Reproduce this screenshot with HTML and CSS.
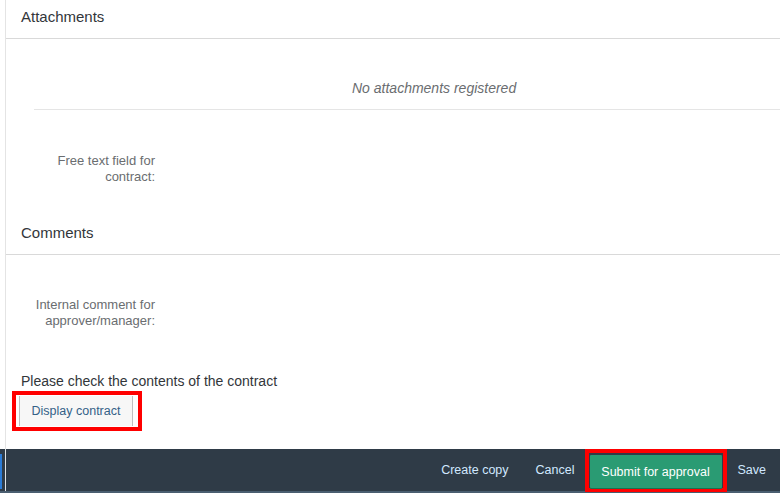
FILE: index.html
```html
<!DOCTYPE html>
<html>
<head>
<meta charset="utf-8">
<link rel="stylesheet" href="styles.css">
</head>
<body>
<div class="screen">
  <main class="content">
    <section class="section">
      <h2 class="section-title">Attachments</h2>
      <div class="empty-row"><span class="empty-text">No attachments registered</span></div>
      <div class="form-row row-free">
        <label class="form-label">Free text field for<br>contract:</label>
        <div class="form-value"></div>
      </div>
    </section>
    <section class="section">
      <h2 class="section-title">Comments</h2>
      <div class="form-row row-comment">
        <label class="form-label">Internal comment for<br>approver/manager:</label>
        <div class="form-value"></div>
      </div>
    </section>
    <div class="check">
      <p class="check-text">Please check the contents of the contract</p>
      <div class="highlight highlight-display">
        <button class="btn-display">Display contract</button>
      </div>
    </div>
  </main>
  <footer class="footer">
    <span class="footer-marker"></span>
    <div class="footer-actions">
      <button class="footer-btn">Create copy</button>
      <button class="footer-btn">Cancel</button>
      <div class="highlight highlight-submit">
        <button class="footer-btn btn-accept">Submit for approval</button>
      </div>
      <button class="footer-btn">Save</button>
    </div>
  </footer>
</div>
</body>
</html>
```

FILE: styles.css
```css
* { box-sizing: border-box; }
html, body { margin: 0; padding: 0; }
body {
  width: 780px;
  height: 493px;
  overflow: hidden;
  background: #ffffff;
  font-family: "Liberation Sans", Arial, sans-serif;
  color: #32363a;
}
.screen {
  display: flex;
  flex-direction: column;
  height: 493px;
  position: relative;
}
.content {
  margin-left: 5px;
  border-left: 1px solid #e4e4e4;
  height: 449px;
  display: flex;
  flex-direction: column;
}
.section-title {
  margin: 0;
  height: 39px;
  padding: 7px 0 0 15px;
  font-size: 15px;
  font-weight: normal;
  line-height: 20px;
  color: #32363a;
  border-bottom: 1px solid #d9d9d9;
}
.empty-row {
  margin-left: 28px;
  height: 71px;
  border-bottom: 1px solid #e5e5e5;
  padding: 40px 0 0 318px;
}
.empty-text {
  font-style: italic;
  font-size: 14px;
  color: #6a6d70;
  line-height: 18px;
}
.form-row {
  display: flex;
}
.form-label {
  width: 149px;
  text-align: right;
  font-size: 13px;
  line-height: 16px;
  color: #6a6d70;
}
.row-free { height: 106px; padding-top: 43px; }
.row-comment { height: 104px; padding-top: 42px; }
.check {
  padding-left: 15px;
  padding-top: 13px;
}
.check-text {
  margin: 0;
  font-size: 14px;
  line-height: 18px;
  color: #32363a;
}
.highlight {
  border: 4px solid #ff0000;
  display: inline-flex;
}
.highlight-display {
  margin: 1px 0 0 -9px;
  padding: 1px 5px 1px 3px;
}
.btn-display {
  height: 30px;
  width: 114px;
  background: #f7f7f7;
  border: none;
  border-left: 1px solid #bfbfbf;
  border-right: 1px solid #bfbfbf;
  font-family: "Liberation Sans", Arial, sans-serif;
  font-size: 12.5px;
  color: #346187;
  padding: 0;
}
.footer {
  height: 44px;
  background: #2f3b47;
  border-bottom: 2px solid #4a5e70;
  position: relative;
  display: flex;
  justify-content: flex-end;
  align-items: stretch;
}
.footer::before {
  content: "";
  position: absolute;
  left: 5px;
  top: 0;
  bottom: 0;
  width: 1px;
  background: #dfe3e6;
}
.footer-marker {
  position: absolute;
  left: 0;
  top: 5px;
  width: 2px;
  height: 35px;
  background: #2b7bd6;
}
.footer-actions {
  display: flex;
  align-items: center;
  padding-right: 14px;
}
.footer-btn {
  background: transparent;
  border: none;
  color: #d1e8ff;
  font-family: "Liberation Sans", Arial, sans-serif;
  font-size: 12.5px;
  padding: 0;
  height: 32px;
  flex: none;
}
.footer-btn + .footer-btn { margin-left: 27px; }
.footer-btn + .highlight { margin-left: 10px; }
.highlight + .footer-btn { margin-left: 11px; }
.highlight-submit {
  padding: 2px 1px 0 1px;
  height: 43px;
  align-self: flex-start;
  flex: none;
}
.btn-accept {
  background: #2a9b73;
  color: #ffffff;
  width: 132px;
  height: 33px;
  border-radius: 1px;
  box-shadow: 0 1px 0 #1c6e50;
}
```
